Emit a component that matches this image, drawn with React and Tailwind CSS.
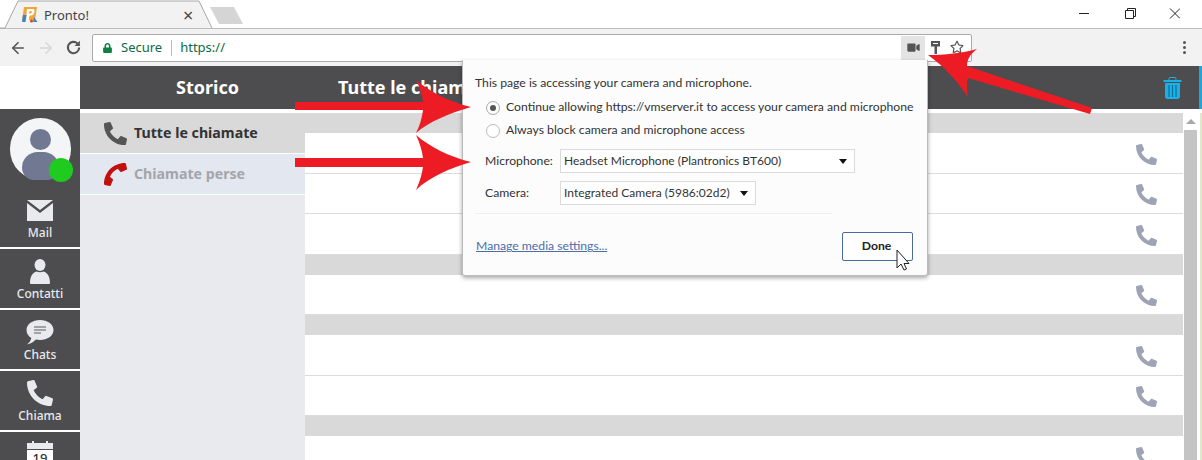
import React from 'react'
import { FaPhoneAlt, FaLock, FaVideo, FaRegStar } from 'react-icons/fa'
import { ArrowLeft, ArrowRight } from 'lucide-react'

const SANS = "font-['Noto_Sans','Open_Sans',sans-serif]"
const POPUP_FONT = "font-['Lato','Noto_Sans',sans-serif]"

const NavItem = ({ label, children }) => (
    <div className="h-[61px] shrink-0 flex flex-col items-center justify-end pb-[6px] bg-[#4d4d4f] border-b-2 border-white text-[#e8eaee]">
        <div className="h-[26px] flex items-center justify-center">{children}</div>
        <span className="text-[12px] leading-[16px] font-medium mt-[2px]">{label}</span>
    </div>
)

const Row = ({ h = 'h-[41px]' }) => (
    <div className={`${h} shrink-0 bg-white border-b border-[#dcdcdc] flex items-center justify-end pr-[26px]`}>
        <FaPhoneAlt className="text-[#9ea3b5] w-[21px] h-[21px] mt-[2px]" />
    </div>
)

const Band = () => <div className="h-[20px] shrink-0 bg-[#d9d9d9]" />

const Select = ({ label, w }) => (
    <div className={`${w} h-[24px] border border-[#dadada] bg-white flex items-center justify-between pl-[3px] pr-[6px] text-[12px] text-[#333] whitespace-nowrap`}>
        <span>{label}</span>
        <span className="w-0 h-0 border-x-[4px] border-x-transparent border-t-[5px] border-t-[#111] mr-[1px]" />
    </div>
)

const Popup = () => (
    <div className={`${POPUP_FONT} absolute left-[462px] top-[60px] w-[466px] h-[216px] bg-[#fcfcfc] border border-[#bbb] border-t-0 rounded-b-[3px] shadow-[0_2px_4px_rgba(0,0,0,0.35)] text-[#333] text-[12.2px] px-[12px]`}>
        <div className="mt-[14px] leading-[18px]">This page is accessing your camera and microphone.</div>
        <div className="mt-[4px] ml-[11px] flex items-center gap-[6px] h-[23px] whitespace-nowrap">
            <span className="w-[14px] h-[14px] shrink-0 rounded-full border border-[#aaa] flex items-center justify-center">
                <span className="w-[6px] h-[6px] rounded-full bg-[#555]" />
            </span>
            Continue allowing https://vmserver.it to access your camera and microphone
        </div>
        <div className="ml-[11px] flex items-center gap-[6px] h-[23px] whitespace-nowrap">
            <span className="w-[14px] h-[14px] shrink-0 rounded-full border border-[#bbb] bg-white" />
            Always block camera and microphone access
        </div>
        <div className="mt-[7px] ml-[10px] flex items-center">
            <span className="w-[75px]">Microphone:</span>
            <Select label="Headset Microphone (Plantronics BT600)" w="w-[295px]" />
        </div>
        <div className="mt-[8px] ml-[10px] flex items-center">
            <span className="w-[75px]">Camera:</span>
            <Select label="Integrated Camera (5986:02d2)" w="w-[196px]" />
        </div>
        <div className="mt-[8px] w-[357px] border-t border-[#eee]" />
        <div className="mt-[18px] flex items-center justify-between pr-[2px]">
            <a className="ml-[1px] text-[#4a6ea8] underline">Manage media settings...</a>
            <div className="w-[71px] h-[29px] border border-[#4a6a9c] rounded-[2px] bg-white flex items-center justify-center font-bold text-[#222]">
                <span className="mr-[2px]">Done</span>
            </div>
        </div>
    </div>
)

const Arrows = () => (
    <svg className="absolute left-0 top-0 pointer-events-none" width="1202" height="460" viewBox="0 0 1202 460">
        <g fill="#ed1c24">
            <path d="M295 102H423C422 95 420 88 416 80C430 92 450 102 471 107C450 113 428 122 416 133C420 125 422 118 423 110H295Z" />
            <path d="M295 158H423C422 151 420 143 416 135C430 147 450 157 471 162C450 168 428 178 416 190C420 181 422 174 423 167H295Z" />
            <path d="M928 55C945 55 962 53 977 49C970 54 967 60 967 66L1092 108L1090 114L968 78C966 84 967 90 968 97C958 82 945 67 928 55Z" />
        </g>
        <path d="M897 250V268L901 264L904 270L906.5 269L904 263.5H909Z" fill="#fff" stroke="#222" strokeWidth="1" />
    </svg>
)

const Trash = () => (
    <svg width="19" height="22" viewBox="0 0 19 22">
        <rect x="0.5" y="3" width="18" height="2" fill="#1ab0e8" />
        <rect x="6" y="0.5" width="7" height="3" rx="1" fill="none" stroke="#1ab0e8" />
        <path d="M2 6H17V19.500C17 21 16 22 14.500 22H4.500C3 22 2 21 2 19.500Z" fill="#1ab0e8" />
        <path d="M6 8V20M9.500 8V20M13 8V20" stroke="#0d6f99" strokeWidth="1.2" />
    </svg>
)

const Favicon = () => (
    <svg className="absolute left-[22px] top-[7px]" width="16" height="16" viewBox="0 0 16 16">
        <path d="M2 0H15L13 13H0Z" fill="#f0a63a" />
        <path d="M5 2H11C12.500 2 12.800 3.500 12.300 5.500C11.800 7.500 10.500 8.500 9 8.500H7.500L6.800 13H4Z" fill="#fff" />
        <path d="M7.500 4H9.800L9.200 6.500H7.100Z" fill="#f0a63a" />
        <path d="M1 8L4.500 8L3.500 15H0Z" fill="#3b86c9" />
        <path d="M12 10L15.500 15H11Z" fill="#3b86c9" />
        <circle cx="9.500" cy="14" r="1.500" fill="#d9451e" />
    </svg>
)

const MailIcon = () => (
    <svg width="26" height="21" viewBox="0 0 26 21">
        <path d="M0 0H26L13 10Z" fill="#e8eaee" />
        <path d="M0 3L13 13L26 3V21H0Z" fill="#e8eaee" />
    </svg>
)

const PersonIcon = () => (
    <svg width="22" height="25" viewBox="0 0 22 25">
        <ellipse cx="11" cy="6" rx="5.500" ry="6" fill="#e8eaee" />
        <path d="M1 24C1 17 4 13.500 7.500 12.500C9.500 13.500 12.500 13.500 14.500 12.500C18 13.500 21 17 21 24C21 24.500 20.500 25 20 25H2C1.500 25 1 24.500 1 24Z" fill="#e8eaee" />
    </svg>
)

const ChatIcon = () => (
    <svg width="28" height="25" viewBox="0 0 28 25">
        <path d="M14 0C21.500 0 27.500 4.300 27.500 10C27.500 15.700 21.500 20 14 20C12.500 20 11 19.800 9.800 19.500C7.500 22 4.500 24 1 24.500C3.500 22.500 4.800 20.500 5.300 18C2.200 16.200 0.500 13.300 0.500 10C0.500 4.300 6.500 0 14 0Z" fill="#e8eaee" />
        <path d="M8 7H20M8 10H20M8 13H15" stroke="#8a8c92" strokeWidth="1.4" />
    </svg>
)

const CalendarIcon = () => (
    <div className="relative w-[26px] h-[30px] shrink-0 flex flex-col">
        <div className="absolute left-[5px] -top-[2px] w-[2px] h-[4px] bg-[#e8eaee]" />
        <div className="absolute right-[5px] -top-[2px] w-[2px] h-[4px] bg-[#e8eaee]" />
        <div className="h-[7px] bg-[#e8eaee] border-b border-[#4d4d4f]" />
        <div className="h-[23px] bg-white text-[#333] text-[13px] leading-[17px] text-center font-medium">19</div>
    </div>
)

const App = () => {
    return (
        <div className={`${SANS} relative w-[1202px] h-[460px] overflow-hidden bg-white`}>
            {/* browser tab strip */}
            <div className="relative h-[28px] bg-white">
                <svg className="absolute left-0 top-0" width="250" height="30" viewBox="0 0 250 30">
                    <path d="M0 28H5L18 1H199L212 28" fill="#f2f2f2" stroke="#a8a8a8" />
                    <path d="M210 7H234L243 24H219Z" fill="#d5d5d5" />
                </svg>
                <Favicon />
                <span className="absolute left-[44px] top-[5px] text-[13px] leading-[20px] text-[#444]">Pronto!</span>
                <span className="absolute left-[183px] top-[8px] text-[#444] text-[18px] leading-[14px]">×</span>
                <svg className="absolute left-[1079px] top-[8px]" width="101" height="11" viewBox="0 0 101 11" fill="none" stroke="#222">
                    <path d="M0 5.500H10" />
                    <path d="M46.500 2.500H54.500V10.500H46.500ZM48.500 2.500V0.500H56.500V8.500H54.500" />
                    <path d="M91 0.500L101 10.500M101 0.500L91 10.500" />
                </svg>
            </div>

            {/* browser toolbar */}
            <div className="h-[38px] bg-[#f2f2f2] border-t border-[#bdbdbd] flex items-center pl-[9px] pr-[15px]">
                <ArrowLeft size={18} strokeWidth={2.2} className="text-[#555]" />
                <ArrowRight size={18} strokeWidth={2.2} className="ml-[10px] text-[#d8d8d8]" />
                <svg className="ml-[10px]" width="17" height="17" viewBox="0 0 24 24">
                    <path d="M20 12a8 8 0 1 1-2.400-5.700" fill="none" stroke="#555" strokeWidth="3" />
                    <path d="M21 2.500V10H13.500Z" fill="#555" />
                </svg>
                <div className="ml-[10px] w-[880px] h-[28px] bg-white border border-[#aaa] rounded-[2px] flex items-center pl-[10px] text-[13px]">
                    <FaLock className="w-[9px] h-[10px] text-[#0b8043]" />
                    <span className="ml-[9px] text-[#0b6b45]">Secure</span>
                    <span className="ml-[9px] h-[16px] border-l border-[#bbb]" />
                    <span className="ml-[8px] text-[#0b6b45]">https://</span>
                    <div className="ml-auto mr-[46px] w-[24px] h-[24px] bg-[#e4e4e4] flex items-center justify-center">
                        <FaVideo className="w-[13px] h-[11px] text-[#555]" />
                    </div>
                </div>
                <div className="ml-auto flex flex-col gap-[2px] mr-[1px]">
                    <span className="w-[3px] h-[3px] rounded-full bg-[#555]" />
                    <span className="w-[3px] h-[3px] rounded-full bg-[#555]" />
                    <span className="w-[3px] h-[3px] rounded-full bg-[#555]" />
                </div>
            </div>
            <svg className="absolute left-[931px] top-[41px]" width="9" height="13" viewBox="0 0 9 13">
                <path d="M0 0H9V5.500H6V13H3.500V5.500H0ZM2 2V3H7V2Z" fill="#555" fillRule="evenodd" />
            </svg>
            <FaRegStar className="absolute left-[950px] top-[40px] w-[14px] h-[14px] text-[#555]" />

            {/* app */}
            <div className="flex h-[394px]">
                <div className="w-[80px] shrink-0 flex flex-col">
                    <div className="h-[43px] shrink-0 bg-white" />
                    <div className="h-[79px] shrink-0 bg-[#4d4d4f] flex items-start justify-center pt-[9px]">
                        <div className="relative w-[61px] h-[62px] rounded-full bg-[#f4f5f6]">
                            <div className="absolute left-[20px] top-[11px] w-[21px] h-[21px] rounded-full bg-[#717892]" />
                            <div className="absolute left-[12px] top-[34px] w-[37px] h-[28px] rounded-t-[18px] rounded-b-[14px] bg-[#717892]" />
                            <div className="absolute left-[39px] top-[40px] w-[24px] h-[24px] rounded-full bg-[#1ecb1e]" />
                        </div>
                    </div>
                    <NavItem label="Mail"><MailIcon /></NavItem>
                    <NavItem label="Contatti"><PersonIcon /></NavItem>
                    <NavItem label="Chats"><ChatIcon /></NavItem>
                    <NavItem label="Chiama"><FaPhoneAlt className="w-[26px] h-[26px]" /></NavItem>
                    <div className="flex-1 bg-[#4d4d4f] flex justify-center pt-[11px] overflow-hidden">
                        <CalendarIcon />
                    </div>
                </div>

                <div className="flex-1 flex flex-col min-w-0">
                    <div className="h-[43px] shrink-0 bg-[#4d4d4f] flex items-center font-bold text-white text-[18px]">
                        <span className="w-[258px] pl-[96px]">Storico</span>
                        <span>Tutte le chiamate</span>
                        <div className="ml-auto mr-[17px]"><Trash /></div>
                        <div className="w-[3px] self-stretch bg-[#1aa7e0]" />
                    </div>
                    <div className="flex-1 flex min-h-0 pt-[4px]">
                        <div className="w-[225px] shrink-0 bg-[#e8eaee] flex flex-col">
                            <div className="h-[41px] bg-[#d9d9d9] border-b border-white flex items-center pl-[24px] gap-[7px] font-bold text-[14.2px] text-[#333]">
                                <FaPhoneAlt className="w-[23px] h-[23px] text-[#555] shrink-0" />
                                Tutte le chiamate
                            </div>
                            <div className="h-[41px] bg-[#e3e7ef] border-b border-white flex items-center pl-[24px] gap-[7px] font-bold text-[14.2px] text-[#a3a5aa]">
                                <FaPhoneAlt className="w-[23px] h-[23px] text-[#c40f0f] shrink-0 rotate-90" />
                                Chiamate perse
                            </div>
                        </div>
                        <div className="flex-1 flex flex-col overflow-hidden min-w-0">
                            <Band />
                            <Row />
                            <Row h="h-[40px]" />
                            <Row />
                            <Band />
                            <Row h="h-[40px]" />
                            <Band />
                            <Row />
                            <Row h="h-[40px]" />
                            <Band />
                            <Row />
                        </div>
                        <div className="w-[15px] shrink-0 bg-white flex flex-col items-center pt-[6px]">
                            <span className="w-0 h-0 border-x-[5px] border-x-transparent border-b-[5px] border-b-[#a8a8a8]" />
                            <div className="w-[13px] flex-1 mt-[6px] bg-[#c4c4c4]" />
                        </div>
                        <div className="w-[4px] shrink-0 bg-white border-r-2 border-[#dfe8c8]" />
                    </div>
                </div>
            </div>

            <Popup />
            <Arrows />
        </div>
    )
}

export default App
